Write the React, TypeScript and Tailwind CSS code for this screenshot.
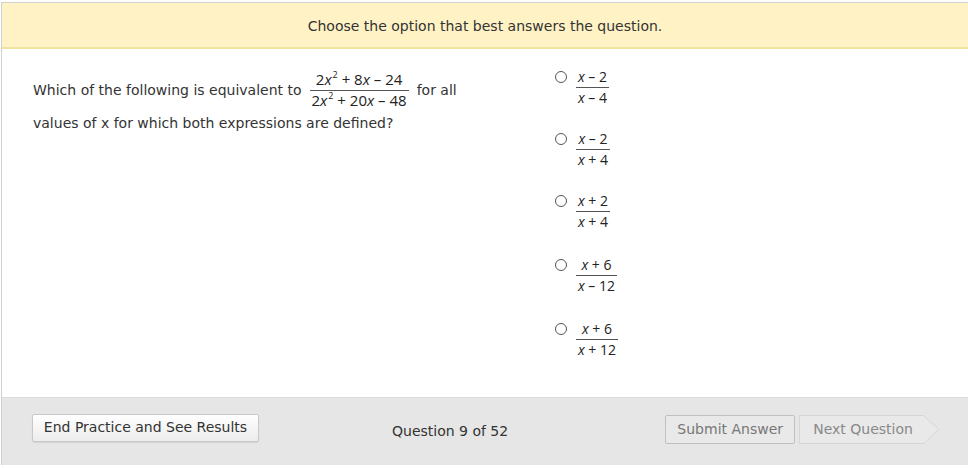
import React from "react";

const MF = { fontFamily: '"Open Sans", "Noto Sans", sans-serif' };

function X() {
  return <span className="italic">x</span>;
}

function Frac({ num, den, cls = "", size = "text-[14px]" }: { num: React.ReactNode; den: React.ReactNode; cls?: string; size?: string }) {
  return (
    <span className={"inline-flex flex-col items-stretch leading-[19px] text-[#222] " + size + " " + cls} style={MF}>
      <span className="text-center border-b border-[#555] px-[2px] pb-[1px] whitespace-nowrap">{num}</span>
      <span className="text-center px-[2px] whitespace-nowrap">{den}</span>
    </span>
  );
}

function Option({ num, den, cls = "" }: { num: React.ReactNode; den: React.ReactNode; cls?: string }) {
  return (
    <div className={"flex items-start gap-[9px] " + cls}>
      <span className="mt-[4px] w-[12px] h-[12px] rounded-full border border-[#555] bg-white shrink-0" />
      <Frac num={num} den={den} />
    </div>
  );
}

export default function App() {
  return (
    <div className="w-[968px] h-[468px] bg-white pt-[2px] pl-[1px] overflow-hidden" style={{ fontFamily: '"DejaVu Sans", Verdana, sans-serif' }}>
      <div className="h-[463px] border-l border-t border-[#d0d0d0] flex flex-col">
        <div className="h-[46px] shrink-0 bg-[#fff2c4] border-b-2 border-[#f2e29f] flex items-center justify-center pt-[3px] text-[14px] text-[#333]">
          Choose the option that best answers the question.
        </div>
        <div className="flex-1 flex">
          <div className="w-[520px] pl-[31px] pt-[21px] text-[14px] leading-[18px] text-[#333]">
            <div className="flex items-center">
              <span>Which of the following is equivalent to</span>
              <Frac
                cls="ml-[8px] mr-[8px]"
                size="text-[15px]"
                num={<>2<X /><sup className="text-[9px] -top-[0.8em] ml-[1px]">2</sup> + 8<X /> – 24</>}
                den={<>2<X /><sup className="text-[9px] -top-[0.8em] ml-[1px]">2</sup> + 20<X /> – 48</>}
              />
              <span>for all</span>
            </div>
            <div className="mt-[4px]">values of x for which both expressions are defined?</div>
          </div>
          <div className="pl-[33px] pt-[18px] flex flex-col gap-[22px]">
            <Option num={<><X /> – 2</>} den={<><X /> – 4</>} />
            <Option num={<><X /> – 2</>} den={<><X /> + 4</>} />
            <Option num={<><X /> + 2</>} den={<><X /> + 4</>} />
            <Option cls="mt-[2px]" num={<><X /> + 6</>} den={<><X /> – 12</>} />
            <Option cls="mt-[2px]" num={<><X /> + 6</>} den={<><X /> + 12</>} />
          </div>
        </div>
        <div className="h-[68px] shrink-0 bg-[#e6e6e6] border-t border-[#dcdcdc] flex items-center text-[14px]">
          <button className="ml-[30px] h-[28px] w-[227px] mt-[-8px] rounded-[2px] border border-[#c8c8c8] bg-gradient-to-b from-white to-[#ececec] text-[#333] shadow-[0_1px_1px_rgba(0,0,0,0.08)]">
            End Practice and See Results
          </button>
          <div className="ml-[133px] text-[#333]">Question 9 of 52</div>
          <button className="ml-[157px] h-[29px] w-[130px] mt-[-4px] rounded-[2px] border border-[#c0c0c0] bg-[#e9e9e9] text-[#777]">
            Submit Answer
          </button>
          <div className="relative ml-[4px] mt-[-4px] h-[29px] w-[141px]">
            <svg className="absolute inset-0" width="141" height="29" viewBox="0 0 141 29">
              <polygon points="0.5,0.5 124.5,0.5 140,14.5 124.5,28.5 0.5,28.5" fill="#e9e9e9" stroke="#d6d6d6" />
            </svg>
            <span className="relative flex h-full items-center pl-[14px] text-[#888]">Next Question</span>
          </div>
        </div>
      </div>
    </div>
  );
}
